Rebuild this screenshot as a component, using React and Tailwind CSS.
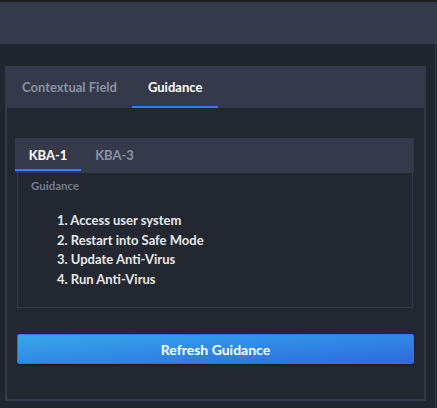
export default function App() {
  const font = { fontFamily: "Lato, 'Noto Sans', sans-serif" };
  return (
    <div className="w-[437px] h-[408px] bg-[#21252e] flex flex-col overflow-hidden" style={font}>
      <div className="h-[2px] bg-[#1b1e25]" />
      <div className="h-[42px] bg-[#343a4a]" />
      <div className="flex flex-1 pt-[22px]">
        <div className="w-[5px]" />
        <div className="w-[421px] h-[335px] border-2 border-[#343a4a] flex flex-col">
          <div className="h-[40px] bg-[#343a4a] flex items-stretch -mt-[2px] pt-[2px] box-content">
            <div className="px-[15px] flex items-center text-[13px] font-bold text-[#8a93a6]">Contextual Field</div>
            <div className="relative px-[16px] flex items-center text-[13px] font-bold text-white">
              Guidance
              <div className="absolute left-0 right-0 bottom-0 h-[2px] bg-[#2f7de6]" />
            </div>
          </div>
          <div className="flex-1 bg-[#232730] pt-[30px] pl-[8px] pr-[10px]">
            <div className="flex flex-col">
              <div className="h-[35px] bg-[#343a4a] flex items-stretch">
                <div className="relative w-[66px] flex items-center justify-center text-[13px] font-bold text-white">
                  KBA-1
                  <div className="absolute left-0 right-0 bottom-[2px] h-[2px] bg-[#2f86ea]" />
                </div>
                <div className="w-[67px] flex items-center justify-center text-[13px] font-bold text-[#8a93a6]">KBA-3</div>
              </div>
              <div className="ml-[2px] mr-[1px] h-[135px] border border-t-0 border-[#363c4b] pl-[13px] pt-[5px]">
                <div className="text-[11.5px] font-bold text-[#737c92] leading-[16px]">Guidance</div>
                <ol className="mt-[17px] pl-[26px] text-[13px] font-bold text-[#e6e8ec] leading-[19.7px]">
                  <li>1. Access user system</li>
                  <li>2. Restart into Safe Mode</li>
                  <li>3. Update Anti-Virus</li>
                  <li>4. Run Anti-Virus</li>
                </ol>
              </div>
              <div className="mt-[26px] ml-[2px] h-[30px] rounded-[2px] border border-[#2f78e4] bg-gradient-to-br from-[#38a7e9] to-[#2f69df] flex items-center justify-center text-[14px] font-bold text-white shadow-[0_1px_2px_rgba(0,0,0,0.4)]">
                Refresh Guidance
              </div>
            </div>
          </div>
        </div>
        <div className="w-[9px]" />
        <div className="w-[1px] bg-[#363c4b] -mt-[22px]" />
      </div>
    </div>
  );
}
